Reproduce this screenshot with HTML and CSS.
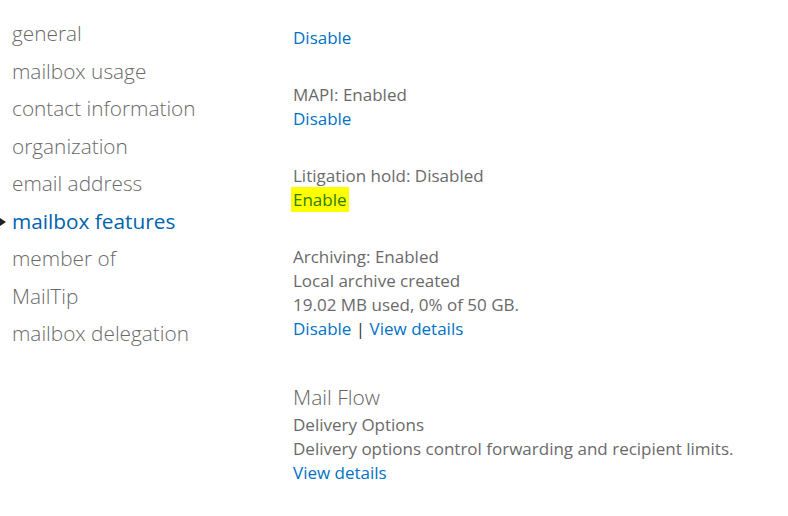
FILE: index.html
```html
<!DOCTYPE html>
<html>
<head>
<meta charset="utf-8">
<link rel="stylesheet" href="styles.css">
</head>
<body>
<div class="page">
  <nav class="nav">
    <ul>
      <li>general</li>
      <li>mailbox usage</li>
      <li>contact information</li>
      <li>organization</li>
      <li>email address</li>
      <li class="active">mailbox features</li>
      <li>member of</li>
      <li>MailTip</li>
      <li>mailbox delegation</li>
    </ul>
  </nav>
  <main class="content">
    <section class="block">
      <div class="line"><a class="link">Disable</a></div>
    </section>
    <section class="block">
      <div class="line">MAPI: Enabled</div>
      <div class="line"><a class="link">Disable</a></div>
    </section>
    <section class="block">
      <div class="line">Litigation hold: Disabled</div>
      <div class="line"><a class="link hl">Enable</a></div>
    </section>
    <section class="block">
      <div class="line">Archiving: Enabled</div>
      <div class="line">Local archive created</div>
      <div class="line">19.02 MB used, 0% of 50 GB.</div>
      <div class="line"><a class="link">Disable</a> <span class="sep">|</span> <a class="link">View details</a></div>
    </section>
    <section class="block group">
      <h2 class="heading">Mail Flow</h2>
      <div class="line">Delivery Options</div>
      <div class="line">Delivery options control forwarding and recipient limits.</div>
      <div class="line"><a class="link">View details</a></div>
    </section>
  </main>
</div>
</body>
</html>
```
FILE: styles.css
```css
html, body {
  margin: 0;
  padding: 0;
  background: #ffffff;
}
body {
  font-family: "Open Sans", "Noto Sans", "Liberation Sans", sans-serif;
  color: #666666;
}
.page {
  display: flex;
  width: 788px;
  height: 516px;
  overflow: hidden;
}
.nav {
  width: 293px;
  flex: none;
}
.nav ul {
  list-style: none;
  margin: 0;
  padding: 15px 0 0 12px;
}
.nav li {
  position: relative;
  font-size: 20.8px;
  font-weight: 300;
  line-height: 37.5px;
  color: #6a6a6a;
  white-space: nowrap;
}
.nav li.active {
  color: #0063ae;
  font-weight: 400;
}
.nav li.active::before {
  content: "";
  position: absolute;
  left: -12px;
  top: 15px;
  border-left: 6px solid #222222;
  border-top: 4.5px solid transparent;
  border-bottom: 4.5px solid transparent;
}
.content {
  padding-top: 26px;
  flex: 1;
}
.block {
  margin-bottom: 33px;
}
.line {
  font-size: 17px;
  line-height: 24px;
  color: #6a6a6a;
  white-space: nowrap;
}
.link {
  color: #0072c6;
  cursor: pointer;
}
.hl {
  background: #ffff00;
  color: #2f7d00;
  padding: 1px 2px;
  margin-left: -2px;
}
.sep {
  color: #333333;
}
.group {
  margin-top: 41px;
}
.heading {
  margin: 0 0 1px 0;
  font-size: 21px;
  font-weight: 300;
  line-height: 30px;
  color: #666666;
}
```
